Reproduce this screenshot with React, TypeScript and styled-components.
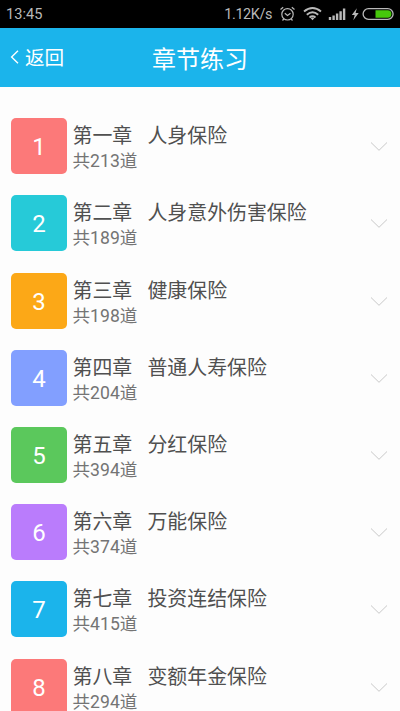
import React from 'react';
import styled, { createGlobalStyle } from 'styled-components';

const GlobalStyle = createGlobalStyle`
  * { box-sizing: border-box; }
  html, body { margin: 0; background: #fdfdfd; }
  body { font-family: Roboto, "Noto Sans CJK SC", sans-serif; overflow: hidden; }
`;

const Screen = styled.div`
  width: 400px;
  height: 711px;
  overflow: hidden;
  background: #fdfdfd;
`;

const StatusBar = styled.div`
  height: 28px;
  padding: 0 5px 0 6px;
  display: flex;
  align-items: center;
  justify-content: space-between;
  background: #000;
  color: #b9b9b9;
  font-size: 14.6px;
  line-height: 28px;
`;

const StatusIcons = styled.div`
  display: flex;
  align-items: center;
  height: 28px;
`;

const Speed = styled.span`
  padding-top: 1px;
  font-size: 14.4px;
  letter-spacing: -0.4px;
  margin-right: 7px;
`;

const Header = styled.header`
  height: 58.5px;
  display: grid;
  grid-template-columns: 100px 1fr 100px;
  align-items: center;
  background: #1bb4eb;
  color: #fff;
`;

const Back = styled.div`
  display: flex;
  align-items: center;
  padding-left: 10px;
  gap: 6px;
  font-size: 19.6px;
  line-height: 28px;
`;

const BackLabel = styled.span`
  padding-top: 4px;
`;

const Title = styled.h1`
  margin: 0;
  padding-top: 5px;
  text-align: center;
  font-size: 24px;
  line-height: 34px;
  font-weight: 400;
`;

const List = styled.main`
  padding-top: 31.8px;
`;

const Row = styled.div`
  height: 77.2px;
  padding: 0 12px 0 11px;
  display: flex;
  align-items: flex-start;
`;

const Tile = styled.div<{ $color: string }>`
  width: 56px;
  height: 56px;
  border-radius: 5px;
  display: flex;
  align-items: center;
  justify-content: center;
  background: ${(p) => p.$color};
  color: #fff;
  font-size: 24px;
  line-height: 28px;
  padding-top: 2px;
`;

const Info = styled.div`
  flex: 1;
  padding: 5px 0 0 5.5px;
`;

const Name = styled.div`
  display: flex;
  gap: 15.3px;
  color: #505050;
  font-size: 19.9px;
  line-height: 27px;
`;

const Count = styled.div`
  color: #747474;
  font-size: 17.6px;
  line-height: 22px;
`;

const Arrow = styled.svg`
  margin-top: 23px;
`;

const chapters = [
  { no: '第一章', name: '人身保险', count: 213, color: '#fc7979' },
  { no: '第二章', name: '人身意外伤害保险', count: 189, color: '#26cad8' },
  { no: '第三章', name: '健康保险', count: 198, color: '#fca817' },
  { no: '第四章', name: '普通人寿保险', count: 204, color: '#829fff' },
  { no: '第五章', name: '分红保险', count: 394, color: '#5bc85c' },
  { no: '第六章', name: '万能保险', count: 374, color: '#ba7cfc' },
  { no: '第七章', name: '投资连结保险', count: 415, color: '#1bb4eb' },
  { no: '第八章', name: '变额年金保险', count: 294, color: '#fc7979' },
];

const StatusGlyphs = () => (
  <svg width="116" height="20" viewBox="0 0 116 20" fill="none" stroke="#b9b9b9">
    {/* alarm clock */}
    <circle cx="8.5" cy="10.3" r="5.7" strokeWidth="1.2" />
    <path d="M5.8 9.2l2.7 2.3 3-2.3M1.5 5.5l2.7-2.3M15.5 5.5l-2.7-2.3M4.8 15l-1.3 1.5M12.2 15l1.3 1.5" strokeWidth="1.2" />
    {/* wifi */}
    <path d="M25 7.5q8.5-7 17 0M27.8 10.7q5.7-4.7 11.4 0M30.5 13.5q3-2.4 6 0" strokeWidth="1.9" />
    <path d="M31.7 14.2q1.8-1.2 3.6 0l-1.8 2z" fill="#b9b9b9" stroke="none" />
    {/* signal */}
    <path d="M51 16v-3M54.6 16v-4.6M58.1 16v-6.5M61.6 16V7.2M65.1 16V4.5" strokeWidth="2.4" />
    {/* charging */}
    <path d="M77.8 4.2l-5 6.8h2.9l-1.4 5.2 5.4-7.1h-3.1z" fill="#b9b9b9" stroke="none" />
    <rect x="84.1" y="4.6" width="30" height="10.8" rx="5.4" strokeWidth="1.3" />
    <path d="M96.5 6.3h12.2a3.7 3.7 0 0 1 0 7.4H96.5z" fill="#46c80b" stroke="none" />
  </svg>
);

export default function App() {
  return (
    <Screen>
      <GlobalStyle />
      <StatusBar>
        <span>13:45</span>
        <StatusIcons>
          <Speed>1.12K/s</Speed>
          <StatusGlyphs />
        </StatusIcons>
      </StatusBar>
      <Header>
        <Back>
          <svg width="9" height="14" viewBox="0 0 9 14" fill="none" stroke="#fff" strokeWidth="1.4">
            <path d="M8 .8L1.6 7 8 13.2" />
          </svg>
          <BackLabel>返回</BackLabel>
        </Back>
        <Title>章节练习</Title>
      </Header>
      <List>
        {chapters.map((c, i) => (
          <Row key={c.no}>
            <Tile $color={c.color}>{i + 1}</Tile>
            <Info>
              <Name>
                <span>{c.no}</span>
                <span>{c.name}</span>
              </Name>
              <Count>共{c.count}道</Count>
            </Info>
            <Arrow width="18" height="11" viewBox="0 0 18 11" fill="none" stroke="#c9c9c9" strokeWidth="1">
              <path d="M1 1.5l8 7.8 8-7.8" />
            </Arrow>
          </Row>
        ))}
      </List>
    </Screen>
  );
}
